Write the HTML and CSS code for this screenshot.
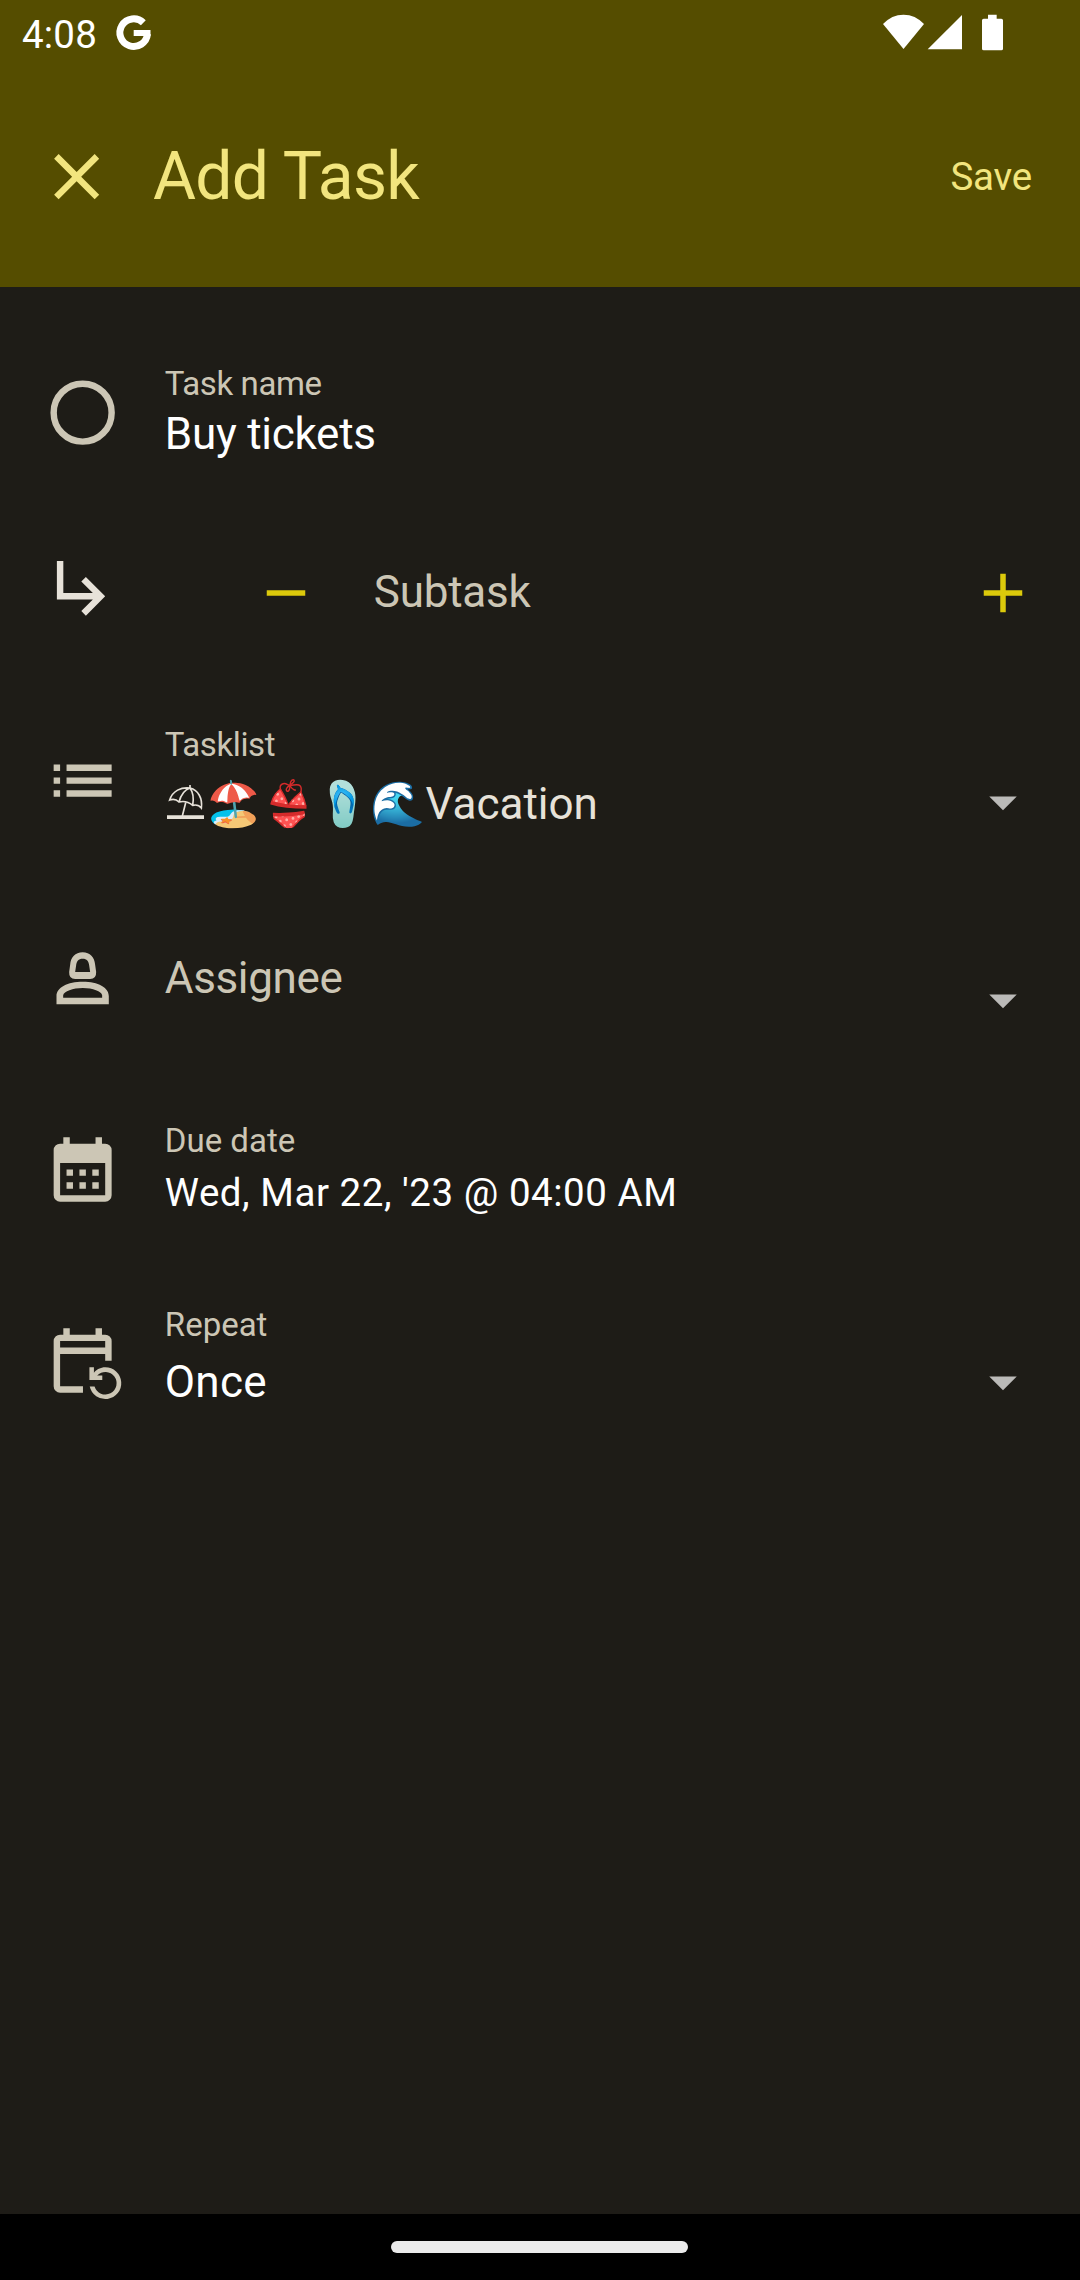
FILE: index.html
```html
<!DOCTYPE html>
<html lang="en">
<head>
<meta charset="utf-8">
<title>Add Task</title>
<link rel="stylesheet" href="styles.css">
</head>
<body>
<div class="screen">
  <header class="header">
    <div class="status">
      <span class="clock">4:08</span>
      <svg class="status-g" viewBox="340 40 120 120"><path d="M428 69A41.5 41.5 0 1 0 440.500 103" fill="none" stroke="#fff" stroke-width="21"/><path d="M399 91H449.500Q450 100 449 109H399Z" fill="#fff"/></svg>
      <svg class="status-icons" viewBox="120 40 380 120" fill="#fff"><path d="M129 73Q155 45 190.500 45T252 73L190.500 148Z"/><path d="M263 149H366V46Z"/><path d="M444 45H470V57H484Q489 57 489 62V147Q489 152 484 152H431Q426 152 426 147V62Q426 57 431 57H444Z"/></svg>
    </div>
    <div class="appbar">
      <svg class="icon" viewBox="0 0 24 24"><path d="M19 6.410L17.590 5 12 10.590 6.410 5 5 6.410 10.590 12 5 17.590 6.410 19 12 13.410 17.590 19 19 17.590 13.410 12z"/></svg>
      <h1 class="title">Add Task</h1>
      <span class="save">Save</span>
    </div>
  </header>

  <main class="form">
    <section class="row row-name">
      <svg class="icon" viewBox="0 0 24 24"><circle cx="12" cy="12" r="9" fill="none" stroke="currentColor" stroke-width="2"/></svg>
      <div class="field">
        <span class="label label-name">Task name</span>
        <span class="value value-name">Buy tickets</span>
      </div>
    </section>

    <section class="row row-subtask">
      <svg class="icon" viewBox="0 0 24 24"><path d="M19 15L13 21 11.580 19.580 15.170 16H4V4H6V14H15.170L11.580 10.420 13 9z"/></svg>
      <svg class="action minus" viewBox="0 0 24 24"><path d="M5 11H19V13H5z"/></svg>
      <span class="hint hint-subtask">Subtask</span>
      <svg class="action plus" viewBox="0 0 24 24"><path d="M19 13H13V19H11V13H5V11H11V5H13V11H19z"/></svg>
    </section>

    <section class="row row-list">
      <svg class="icon" viewBox="0 0 24 24"><path d="M3 7H5V9H3zM3 11H5V13H3zM3 15H5V17H3zM7 7H21V9H7zM7 11H21V13H7zM7 15H21V17H7z"/></svg>
      <div class="field">
        <span class="label label-list">Tasklist</span>
        <span class="value value-list"><svg class="umbrella" viewBox="405 198 125 164" fill="none" stroke="#e7e2d9" stroke-width="5" role="img" aria-label="⛱"><path d="M419 270C428 242 453 231 480 234C505 240 518 266 514 294Q505 282 488 286Q469 270 447 276Q435 264 419 270ZM480 225V234Q456 242 447 276M480 234Q494 254 488 286M467 278L457 318"/><path d="M411 321.500H522" stroke-width="11"/></svg><span class="emoji">🏖️👙🩴🌊</span>Vacation</span>
      </div>
      <svg class="arrow" viewBox="0 0 24 24"><path d="M7 10L12 15 17 10z"/></svg>
    </section>

    <section class="row row-assignee">
      <svg class="icon" viewBox="41.500 60 232 232"><path fill-rule="evenodd" d="M157.500 97C180 97 193 112 195 134L198 156Q199 177 180 177H135Q116 177 117 156L120 134C122 112 135 97 157.500 97ZM157.500 116C145 116 139 124 138 136L135 156H180L177 136C176 124 170 116 157.500 116ZM79 253V228C79 202 112 185 158 185S236 202 236 228V253ZM99 233H216V226C214 214 188 204 158 204S101 214 99 226Z"/></svg>
      <span class="hint hint-assignee">Assignee</span>
      <svg class="arrow" viewBox="0 0 24 24"><path d="M7 10L12 15 17 10z"/></svg>
    </section>

    <section class="row row-due">
      <svg class="icon" viewBox="0 0 24 24"><path fill-rule="evenodd" d="M6 1H8V3H16V1H18V3H19A2 2 0 0 1 21 5V19A2 2 0 0 1 19 21H5A2 2 0 0 1 3 19V5A2 2 0 0 1 5 3H6zM5 9V19H19V9zM7 11H9V13H7zM11 11H13V13H11zM15 11H17V13H15zM7 15H9V17H7zM11 15H13V17H11zM15 15H17V17H15z"/></svg>
      <div class="field">
        <span class="label label-due">Due date</span>
        <span class="value value-due">Wed, Mar 22, '23 @ 04:00 AM</span>
      </div>
    </section>

    <section class="row row-repeat">
      <svg class="icon" viewBox="0 0 24 24"><path d="M6 1H8V3H16V1H18V3H19A2 2 0 0 1 21 5V11.100H19V9H5V19H12.100V21H5A2 2 0 0 1 3 19V5A2 2 0 0 1 5 3H6zM5 5V7H19V5z" fill-rule="evenodd"/><path d="M14.100 13.100H15.500V14.800C16.300 13.800 17.600 13.100 19 13.100A4.950 4.950 0 1 1 14.200 19.100H15.700A3.500 3.500 0 1 0 16.500 15.700H18.100V17.100H14.100z"/></svg>
      <div class="field">
        <span class="label label-repeat">Repeat</span>
        <span class="value value-repeat">Once</span>
      </div>
      <svg class="arrow" viewBox="0 0 24 24"><path d="M7 10L12 15 17 10z"/></svg>
    </section>
  </main>

  <footer class="navbar"><span class="pill"></span></footer>
</div>
</body>
</html>
```
FILE: styles.css
```css
* { box-sizing: border-box; }

body {
  margin: 0;
  background: #1e1c17;
  font-family: Roboto, "Noto Color Emoji", sans-serif;
}

svg {
  display: block;
  flex: none;
  overflow: visible;
}

.screen {
  display: flex;
  flex-direction: column;
  width: 1080px;
  height: 2280px;
  overflow: hidden;
}

/* Header */
.header {
  height: 287px;
  background: #554d00;
  color: #f2e57e;
}

.status {
  display: flex;
  align-items: flex-start;
  height: 66px;
  padding: 13.300px 73.300px 0 22px;
  color: #fff;
}

.clock {
  width: 91.600px;
  font-size: 38.500px;
  line-height: 43px;
  letter-spacing: 0.200px;
}

.status-g { width: 40px; height: 40px; }

.status-icons {
  width: 126.700px;
  height: 40px;
  margin-left: auto;
}

.appbar {
  display: flex;
  align-items: center;
  height: 221px;
  padding: 0 48px 0 38px;
}

.title {
  margin: 0 0 0 37.700px;
  font-size: 66px;
  font-weight: 400;
  line-height: 78px;
  letter-spacing: -0.700px;
}

.save {
  margin-left: auto;
  font-size: 38.500px;
  line-height: 46px;
  letter-spacing: -0.200px;
}

/* Form rows */
.form {
  flex: 1;
  padding-top: 77px;
  color: #ccc6b5;
}

.row {
  display: flex;
  align-items: center;
  padding: 0 44px;
}

.icon {
  width: 77.300px;
  height: 77.300px;
  fill: currentColor;
}

.row .icon { margin-right: 43.500px; }

.field {
  display: flex;
  flex-direction: column;
}

.label {
  font-size: 33px;
  line-height: 40px;
}

.value, .hint {
  font-size: 44px;
  line-height: 57px;
  white-space: nowrap;
}

.value { color: #fff; }

.arrow {
  width: 66px;
  height: 66px;
  margin-left: auto;
  fill: #bbbab8;
}

.action {
  width: 66px;
  height: 66px;
  fill: #dcc90b;
}

.row-name { height: 98px; }
.row-name .field { gap: 2px; margin-bottom: -1px; }
.row-name .icon { margin-bottom: 1px; }
.label-name { letter-spacing: -0.400px; }
.value-name { letter-spacing: -0.260px; }

.row-subtask { height: 88px; margin-top: 87px; }
.row-subtask .icon { margin-bottom: 12px; color: #e7e2d9; }
.minus { margin-left: 88px; }
.plus { margin-left: auto; }
.hint-subtask { margin: 0 0 1px 55px; letter-spacing: -0.250px; }

.row-list { height: 117px; margin-top: 88px; }
.row-list .icon { margin-bottom: 6px; }
.row-list .arrow { margin-top: 37px; }
.label-list { letter-spacing: -0.400px; }
.value-list {
  display: flex;
  align-items: center;
  height: 77px;
  padding-top: 2px;
  color: #e7e2d9;
}
.umbrella { width: 41.700px; height: 54.700px; margin-top: -2px; }
.emoji {
  width: 219px;
  font-family: "Noto Color Emoji", sans-serif;
}

.row-assignee { height: 88px; margin-top: 93px; }
.row-assignee .arrow { margin-top: 41px; }
.hint-assignee { margin-bottom: 2px; letter-spacing: -0.350px; }

.row-due { height: 98px; margin-top: 98px; }
.row-due .icon { margin-top: 5px; }
.row-due .field { gap: 6px; }
.value-due { font-size: 38.500px; line-height: 52px; letter-spacing: 0.530px; }

.row-repeat { height: 105px; margin-top: 86px; }
.row-repeat .icon { margin-top: 12px; }
.row-repeat .arrow { margin-top: 48px; }
.row-repeat .field { gap: 9px; margin-bottom: -1px; }
.value-repeat { letter-spacing: 0.300px; }

/* Gesture bar */
.navbar {
  display: flex;
  justify-content: center;
  height: 66px;
  padding: 27px 1px 0 0;
  background: #000;
}

.pill {
  width: 297px;
  height: 12px;
  border-radius: 6px;
  background: #ebebeb;
}
```
